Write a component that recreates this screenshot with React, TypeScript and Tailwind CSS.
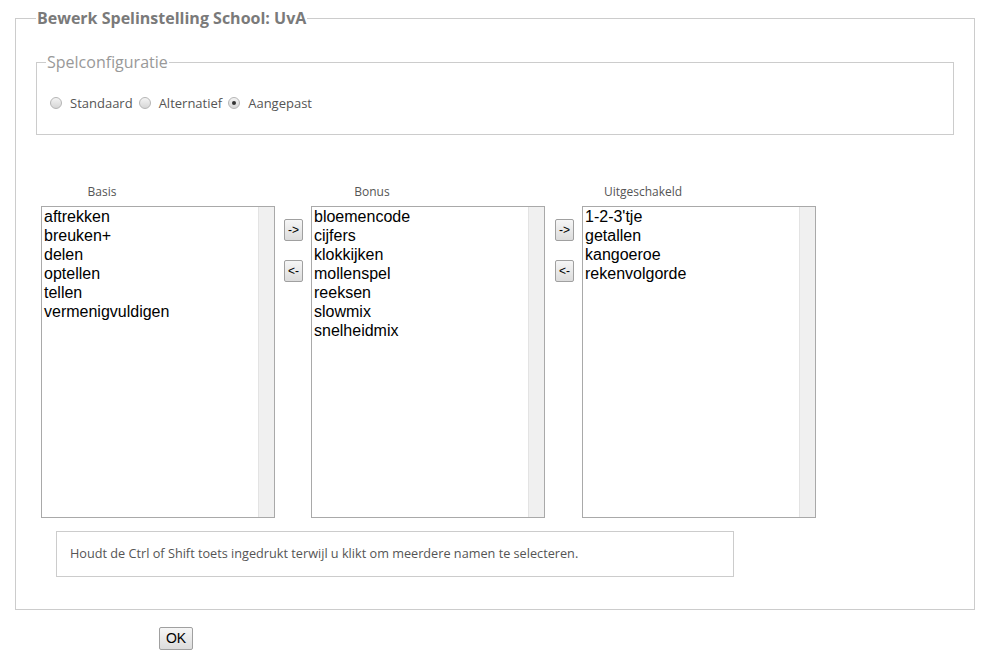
import React from "react";

const basis = ["aftrekken", "breuken+", "delen", "optellen", "tellen", "vermenigvuldigen"];
const bonus = ["bloemencode", "cijfers", "klokkijken", "mollenspel", "reeksen", "slowmix", "snelheidmix"];
const uitgeschakeld = ["1-2-3'tje", "getallen", "kangoeroe", "rekenvolgorde"];

function Radio({ label, checked }: { label: string; checked?: boolean }) {
  return (
    <label className="flex items-center">
      <span className="flex h-[12px] w-[12px] items-center justify-center rounded-full border border-[#b5b5b5] bg-gradient-to-b from-[#f4f4f4] to-[#d6d6d6]">
        {checked ? <span className="h-[4px] w-[4px] rounded-full bg-[#333]" /> : null}
      </span>
      <span className="ml-[8px] mr-[6px]">{label}</span>
    </label>
  );
}

function ListBox({ items }: { items: string[] }) {
  return (
    <div className="flex h-[312px] w-[234px] border border-[#a9a9a9] bg-white">
      <ul className="flex-1 pl-[2px] font-['Liberation_Sans',Arial,sans-serif] text-[16px] leading-[19px] text-black">
        {items.map((item) => (
          <li key={item}>{item}</li>
        ))}
      </ul>
      <div className="w-[16px] border-l border-[#e3e3e3] bg-[#f0f0f0]" />
    </div>
  );
}

function MoveButton({ label }: { label: string }) {
  return (
    <button className="h-[22px] w-[19px] rounded-[2px] border border-[#a0a0a0] bg-gradient-to-b from-[#f6f6f6] to-[#dcdcdc] font-['Liberation_Sans',Arial,sans-serif] text-[12px] leading-[18px] text-black">
      {label}
    </button>
  );
}

function Column({ title, items }: { title: string; items: string[] }) {
  return (
    <div className="flex flex-col">
      <div className="w-[122px] text-center text-[12px] leading-[16px] text-[#555]">{title}</div>
      <div className="mt-[6px]">
        <ListBox items={items} />
      </div>
    </div>
  );
}

function Movers({ className }: { className: string }) {
  return (
    <div className={`mt-[35px] flex flex-col gap-[19px] ${className}`}>
      <MoveButton label="->" />
      <MoveButton label="<-" />
    </div>
  );
}

export default function App() {
  return (
    <div className="h-[657px] w-[990px] bg-white pt-[9px] font-['Open_Sans',sans-serif]">
      <fieldset className="ml-[15px] w-[960px] border border-[#cccccc] px-[20px] pb-[32px]">
        <legend className="px-[1px] text-[16px] font-bold leading-[18px] text-[#7a7a7a]">
          Bewerk Spelinstelling School: UvA
        </legend>

        {/* Spelconfiguratie */}
        <fieldset className="mt-[25px] border border-[#cccccc] px-[13px] pb-[22px]">
          <legend className="ml-[-4px] px-[1px] text-[16px] leading-[20px] text-[#999]">Spelconfiguratie</legend>
          <div className="mt-[22px] flex items-center text-[13px] leading-[18px] text-[#555]">
            <Radio label="Standaard" />
            <Radio label="Alternatief" />
            <Radio label="Aangepast" checked />
          </div>
        </fieldset>

        <div className="ml-[5px] mt-[49px] flex">
          <Column title="Basis" items={basis} />
          <Movers className="pl-[9px] pr-[8px]" />
          <Column title="Bonus" items={bonus} />
          <Movers className="pl-[10px] pr-[8px]" />
          <Column title="Uitgeschakeld" items={uitgeschakeld} />
        </div>

        <div className="ml-[20px] mt-[13px] flex h-[46px] w-[678px] items-center border border-[#cccccc] pl-[13px] text-[12.7px] text-[#555]">
          Houdt de Ctrl of Shift toets ingedrukt terwijl u klikt om meerdere namen te selecteren.
        </div>
      </fieldset>

      <div className="ml-[159px] mt-[15px]">
        <button className="h-[23px] w-[34px] rounded-[2px] border border-[#a0a0a0] bg-gradient-to-b from-[#f6f6f6] to-[#dcdcdc] font-['Liberation_Sans',Arial,sans-serif] text-[14px] leading-[20px] text-black">
          OK
        </button>
      </div>
    </div>
  );
}
